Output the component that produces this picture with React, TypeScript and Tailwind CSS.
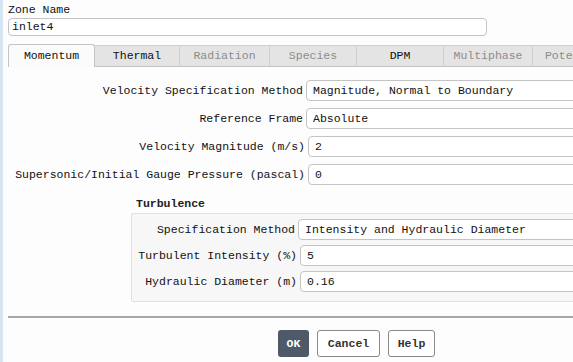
import React from "react";

const tabs = [
  { label: "Momentum", w: "w-[87px]", active: true },
  { label: "Thermal", w: "w-[85px]" },
  { label: "Radiation", w: "w-[90px]", disabled: true },
  { label: "Species", w: "w-[87px]", disabled: true },
  { label: "DPM", w: "w-[87px]" },
  { label: "Multiphase", w: "w-[89px]", disabled: true },
  { label: "Potential", w: "w-[87px]", disabled: true },
];

function Box({ value }: { value: string }) {
  return (
    <div className="h-[21px] w-[300px] shrink-0 rounded-[4px] border border-[#c4c4c4] bg-white px-[6px] leading-[20px] text-[#111]">
      {value}
    </div>
  );
}

function Row({ label, value, labelW }: { label: string; value: string; labelW: string }) {
  return (
    <div className="flex items-center gap-[3px]">
      <div className={`${labelW} shrink-0 text-right text-[#111]`}>{label}</div>
      <Box value={value} />
    </div>
  );
}

export default function App() {
  return (
    <div
      className="flex h-[362px] w-[573px] overflow-hidden bg-[#fdfdfd] text-[11.5px]"
      style={{ fontFamily: '"Liberation Mono", "DejaVu Sans Mono", monospace' }}
    >
      <div className="w-[3px] shrink-0 bg-[#d6e6f2]" />
      <div className="flex min-w-0 flex-1 flex-col pl-[5px]">
        <div className="mt-[3px] h-[14px] leading-[14px] text-[#111]">Zone Name</div>
        <div className="mt-[1px] h-[18px] w-[479px] rounded-[4px] border border-[#c4c4c4] bg-white px-[3px] leading-[16px] text-[#111]">
          inlet4
        </div>

        {/* tab strip, last tab runs off the edge */}
        <div className="mt-[9px] flex h-[22px] items-end border-b border-[#c4c4c4]">
          {tabs.map((t) =>
            t.active ? (
              <div
                key={t.label}
                className={`${t.w} -mb-px flex h-[23px] shrink-0 items-center justify-center rounded-t-[3px] border border-b-0 border-[#c4c4c4] bg-[#fbfbfb] text-[#111]`}
              >
                {t.label}
              </div>
            ) : (
              <div
                key={t.label}
                className={`${t.w} flex h-[21px] shrink-0 items-center justify-center border-t border-r border-[#cfcfcf] bg-[#e4e4e4] ${
                  t.disabled ? "text-[#8c8c8c]" : "text-[#111]"
                }`}
              >
                {t.label}
              </div>
            )
          )}
        </div>

        <div className="mt-[13px] flex flex-col gap-[7px]">
          <Row label="Velocity Specification Method" value="Magnitude, Normal to Boundary" labelW="w-[295px]" />
          <Row label="Reference Frame" value="Absolute" labelW="w-[295px]" />
          <Row label="Velocity Magnitude (m/s)" value="2" labelW="w-[297px]" />
          <Row label="Supersonic/Initial Gauge Pressure (pascal)" value="0" labelW="w-[297px]" />
        </div>

        <div className="ml-[128px] mt-[11px] h-[16px] font-bold leading-[16px] text-[#222]">Turbulence</div>
        <div className="ml-[123px] mt-[1px] flex h-[89px] w-[460px] flex-col gap-[5px] rounded-[2px] border border-[#e0e0e0] bg-[#f7f7f7] pt-[5px]">
          <Row label="Specification Method" value="Intensity and Hydraulic Diameter" labelW="w-[163px]" />
          <Row label="Turbulent Intensity (%)" value="5" labelW="w-[165px]" />
          <Row label="Hydraulic Diameter (m)" value="0.16" labelW="w-[165px]" />
        </div>

        <div className="mt-[14px] h-[2px] w-full bg-[#a8a8a8]" />

        <div className="mt-[12px] flex gap-[8px] pl-[270px]">
          <div className="flex h-[27px] w-[31px] items-center justify-center rounded-[3px] bg-[#4e5a68] font-bold text-white">
            OK
          </div>
          <div className="flex h-[27px] w-[63px] items-center justify-center rounded-[3px] border border-[#8a8a8a] bg-white font-bold text-[#333]">
            Cancel
          </div>
          <div className="flex h-[27px] w-[47px] items-center justify-center rounded-[3px] border border-[#8a8a8a] bg-white font-bold text-[#333]">
            Help
          </div>
        </div>
      </div>
    </div>
  );
}
